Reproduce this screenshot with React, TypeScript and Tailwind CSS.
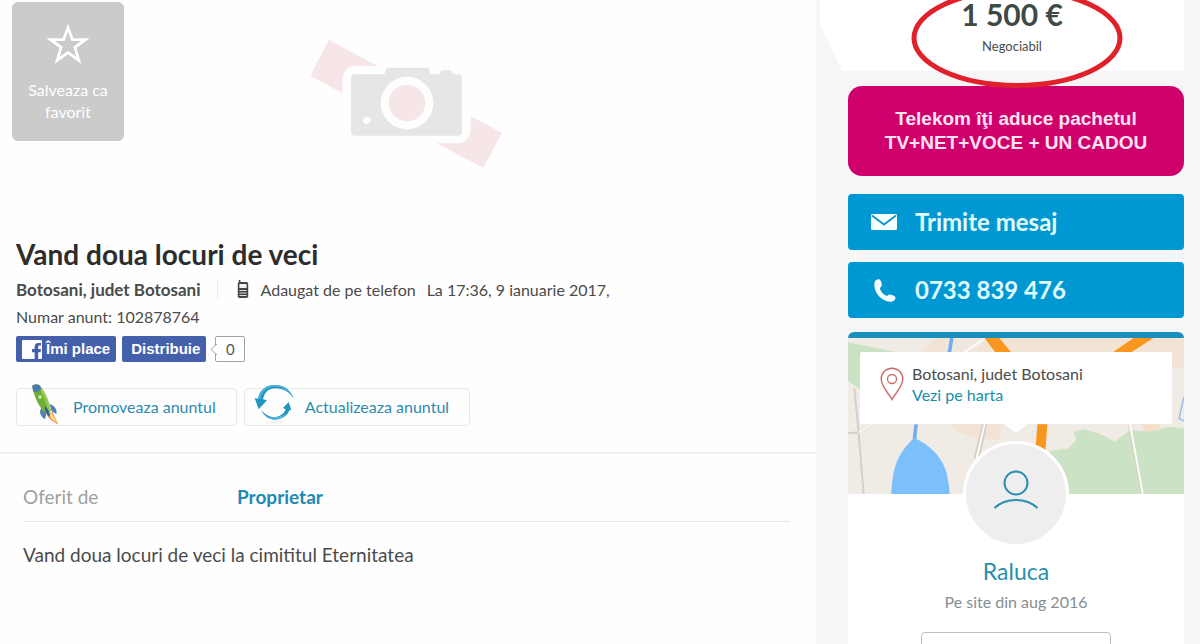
import React from "react";

function StarIcon() {
  return (
    <svg width="42" height="40" viewBox="0 0 42 40" aria-hidden="true">
      <path
        d="M21 3.5l4.3 12.2h13L27.9 23.4l3.9 12.8L21 28.7l-10.8 7.5 3.9-12.8L3.7 15.7h13z"
        fill="none"
        stroke="#fff"
        strokeWidth="2.8"
      />
    </svg>
  );
}

function CameraPlaceholder() {
  return (
    <svg className="mt-5" width="240" height="170" viewBox="-6 0 720 510" role="img" aria-label="Fara fotografie">
      <path d="M116 59L636 339L580 444L61 168z" fill="#f6e6e8" />
      <path
        d="M158 344V176Q160 138 200 138H266Q272 120 292 120H412L440 130H490Q542 136 542 178V326Q538 370 500 370H184Q158 368 158 344z"
        fill="#fefefe"
      />
      <path
        d="M183 174Q183 163 194 163H278Q286 163 286 152Q287 143 296 143H410Q419 143 419 153Q419 163 427 163H444Q450 163 450 157Q452 151 459 151H477Q484 151 486 157Q487 163 492 163H506Q516 163 516 174V337Q516 347 506 347H194Q183 347 183 337z"
        fill="#e6e6e6"
      />
      <circle cx="351" cy="249" r="79" fill="#fefefe" />
      <circle cx="351" cy="249" r="55" fill="#f6e6e8" />
      <circle cx="230" cy="301" r="11" fill="#fefefe" />
    </svg>
  );
}

function MobileIcon() {
  return (
    <svg width="12" height="20" viewBox="0 0 12 20" aria-hidden="true">
      <rect x="1.8" y="0" width="1.6" height="4" fill="#444" />
      <rect x="0.8" y="2" width="10.4" height="16" rx="1.8" fill="#444" />
      <rect x="2.4" y="4" width="7.2" height="4" fill="#f4f4f4" />
      <path d="M2.4 10.5h7.2M2.4 13h7.2M2.4 15.5h7.2" stroke="#ddd" strokeWidth="1" />
    </svg>
  );
}

function FacebookIcon() {
  return (
    <svg width="20" height="19" viewBox="0 0 20 19" aria-hidden="true">
      <path
        d="M1 0H19Q20 0 20 1V18Q20 19 19 19H16.2V12.2H18.6L19 9H16.2V7.2C16.2 6 16.7 5.6 17.7 5.6H19V2.9H16.6C14 2.9 12.6 4.3 12.6 6.8V9H10V12.2H12.6V19H1Q0 19 0 18V1Q0 0 1 0z"
        fill="#fff"
      />
    </svg>
  );
}

function RocketIcon() {
  return (
    <svg className="shrink-0" width="32" height="42" viewBox="0 0 96 126" aria-hidden="true">
      <path d="M46 92L64 84L82 122L60 108z" fill="#f28a4a" />
      <path d="M52 92L62 88L78 118L62 104z" fill="#ffe08c" />
      <path d="M34 70C22 80 26 96 42 106L46 90z" fill="#5580ad" />
      <path d="M56 60C70 64 80 78 76 90L62 82z" fill="#5580ad" />
      <path d="M4 5C10 0 22 0 27 6C42 24 54 50 60 82L44 90C24 68 8 38 4 5z" fill="#6fae38" />
      <path d="M17 1C22 1 25 3 27 6C42 24 54 50 60 82L52 87C46 56 34 26 17 1z" fill="#93cb52" />
      <path d="M4 5C10 0 22 0 27 6L31 14C26 22 16 25 7 23C5 16 4 10 4 5z" fill="#4a7aaf" />
      <path d="M42 66C50 72 56 84 58 100C46 92 40 80 42 66z" fill="#345f96" />
      <circle cx="27" cy="39" r="5" fill="#d9f0c0" />
    </svg>
  );
}

function RefreshIcon() {
  return (
    <svg className="shrink-0" width="42" height="42" viewBox="0 0 126 126" aria-hidden="true">
      <ellipse cx="68" cy="115" rx="30" ry="5" fill="#f5f5f5" />
      <path d="M5 42L15 44C20 16 42 3 66 3C94 3 112 18 122 43C108 22 88 12 66 13C46 14 34 26 30 46L42 49L17 76z" fill="#2196bf" />
      <path d="M15 44C20 16 42 3 66 3C94 3 112 18 122 43C110 22 90 8 66 8C40 9 26 22 22 46z" fill="#4fb2d8" />
      <path d="M90 72L107 54L115 79L109 79C102 98 84 107 66 107C46 106 32 94 24 77C36 92 50 99 66 99C82 98 93 89 98 76z" fill="#2196bf" />
      <path d="M100 88C88 100 62 105 38 92C52 107 88 112 100 88z" fill="#5cbce0" />
    </svg>
  );
}

function MapBackground() {
  return (
    <svg className="absolute inset-0 h-full w-full" viewBox="81 39 1011 468" preserveAspectRatio="none" aria-hidden="true">
      <rect x="81" y="39" width="1011" height="468" fill="#f0ebe5" />
      <path d="M300 80L345 39H1092V130H1052V80z" fill="#f2e3d4" />
      <path d="M385 39H500L460 80H370z" fill="#f0e8df" />
      <path d="M81 52L222 80L122 100V196L81 168z" fill="#cbe3c4" />
      <path d="M385 298H540V345L470 340Q410 325 385 298z" fill="#f2e3d6" />
      <path d="M965 298H1025L1010 322H970z" fill="#f4dfcb" />
      <path d="M690 378L745 370L768 345L760 320L790 313L835 325L885 350L930 315L985 320L1050 305L1092 310V507H690z" fill="#cbe3c4" />
      <path d="M100 190L113 322L128 507M113 322L150 298M81 325L113 322M487 298L462 400M497 298L474 400" stroke="#d5cfc8" strokeWidth="6" fill="none" />
      <path d="M113 322L150 298M492 298L468 400M495 39L430 82M930 298L968 507" stroke="#fff" strokeWidth="5" fill="none" />
      <path d="M924 298L962 507" stroke="#e3cfbd" strokeWidth="2" fill="none" />
      <path d="M393 39L386 82M286 298L281 342" stroke="#74adea" strokeWidth="11" fill="none" />
      <path d="M281 338C322 358 360 390 375 435Q384 465 387 507H211Q214 462 219 440C227 400 250 365 281 338z" fill="#7cc0fb" />
      <path d="M1092 215L1077 280L1092 288" stroke="#8fbcf0" strokeWidth="4" fill="none" />
      <path d="M492 39H536L572 82H524zM940 39H1000L933 82H878zM651 298H681L675 375H645z" fill="#f8961d" />
    </svg>
  );
}

function PinIcon() {
  return (
    <svg className="shrink-0" width="24" height="34" viewBox="0 0 24 34" fill="none" stroke="#cf6a6a" aria-hidden="true">
      <path d="M12 32.5C9.5 27.5 1.2 19.5 1.2 12A10.8 10.8 0 0 1 22.8 12C22.8 19.5 14.5 27.5 12 32.5z" strokeWidth="1.4" />
      <circle cx="12" cy="12" r="4.5" strokeWidth="1.3" />
    </svg>
  );
}

function Avatar() {
  return (
    <div className="relative -mt-[53px] flex size-[106px] items-start justify-center rounded-full border-3 border-white bg-[#eeeeee] pt-[26px]">
      <svg width="46" height="40" viewBox="0 0 46 40" fill="none" stroke="#2b8fb3" strokeWidth="2" aria-hidden="true">
        <circle cx="23" cy="13" r="11.5" />
        <path d="M1.5 38Q10 30 23 30T44.5 38" />
      </svg>
    </div>
  );
}

function Listing() {
  return (
    <main className="min-w-0 flex-1">
      <section className="relative flex h-[236px] items-start justify-center">
        <button className="absolute top-[2px] left-3 flex h-[139px] w-28 flex-col items-center rounded-md bg-[#cbcbcb] px-3 pt-[22px] text-base leading-[22px] text-white">
          <StarIcon />
          <span className="mt-[15px]">Salveaza ca favorit</span>
        </button>
        <CameraPlaceholder />
      </section>

      <section className="border-b-2 border-[#f1f1f1] px-4 pb-[26px]">
        <h1 className="text-[28px] leading-9 font-bold text-[#2d2d2d]">Vand doua locuri de veci</h1>
        <div className="mt-2 flex items-center text-base leading-5">
          <strong className="border-r border-[#eeeeee] pr-4 text-[17px]">Botosani, judet Botosani</strong>
          <span className="ml-[19px] flex items-center gap-3">
            <MobileIcon />
            Adaugat de pe telefon
          </span>
          <span className="ml-[11px]">La 17:36, 9 ianuarie 2017,</span>
        </div>
        <p className="mt-[7px] text-base leading-5">Numar anunt: 102878764</p>

        <div className="mt-[9px] flex h-[26px] items-stretch font-['Liberation_Sans',Arial,sans-serif] text-[15px] font-bold text-white">
          <button className="flex items-center gap-1 rounded-xs bg-[#4560ab] px-[6px]">
            <FacebookIcon />
            Îmi place
          </button>
          <button className="ml-[6px] rounded-xs bg-[#4560ab] pr-[6px] pl-[9px]">Distribuie</button>
          <div className="relative ml-[9px] flex w-[30px] items-center justify-center rounded-xs border border-[#a3a3a3] bg-white font-['Lato',sans-serif] font-normal text-[#555]">
            <svg className="absolute top-[7px] -left-[6px]" width="7" height="11" viewBox="0 0 7 11" aria-hidden="true">
              <path d="M7 0L1 5.5L7 11" fill="#fff" stroke="#a3a3a3" />
            </svg>
            0
          </div>
        </div>

        <div className="mt-[26px] flex h-[38px] items-stretch gap-[7px] text-base text-[#2e8ab0]">
          <a href="#promoveaza" className="flex items-center rounded-sm border border-[#e8e8e8] pr-5 pl-[14px]">
            <span className="-mt-1 mr-[10px]">
              <RocketIcon />
            </span>
            Promoveaza anuntul
          </a>
          <a href="#actualizeaza" className="flex items-center rounded-sm border border-[#e8e8e8] pr-5 pl-2">
            <span className="-mt-1 mr-[10px]">
              <RefreshIcon />
            </span>
            Actualizeaza anuntul
          </a>
        </div>
      </section>

      <section className="pt-[31px] pr-[26px] pl-[23px] text-[19px] leading-6">
        <dl className="flex border-b border-[#e6e6e6] pb-3">
          <dt className="w-[214px] text-[#9f9f9f]">Oferit de</dt>
          <dd className="font-bold text-[#2089b4]">Proprietar</dd>
        </dl>
        <p className="mt-[21px]">Vand doua locuri de veci la cimititul Eternitatea</p>
      </section>
    </main>
  );
}

function Sidebar() {
  return (
    <aside className="w-96 shrink-0 bg-[#f6f6f6] pr-4 pl-1">
      <div className="flex h-[71px] flex-col items-center bg-white pl-5 text-center [clip-path:polygon(0_0,100%_0,100%_100%,22px_100%,0_25px)]">
        <strong className="text-[30px] leading-7 text-[#3f4a45]">1 500 €</strong>
        <span className="mt-2 text-[13px] leading-5">Negociabil</span>
      </div>

      <div className="relative ml-7 pt-[15px]">
        <svg className="absolute -top-[84px] left-[63px]" width="214" height="102" viewBox="0 0 214 102" aria-hidden="true">
          <ellipse cx="106" cy="51" rx="103" ry="47.5" fill="none" stroke="#e0202a" strokeWidth="5" />
        </svg>
        <a
          href="#telekom"
          className="flex h-[90px] flex-col items-center justify-center rounded-[14px] bg-[#cf006c] text-center font-['Liberation_Sans',Arial,sans-serif] text-[19px] leading-6 font-bold text-[#ffe3f4]"
        >
          <span>Telekom îţi aduce pachetul</span>
          <span>TV+NET+VOCE + UN CADOU</span>
        </a>

        <button className="mt-[18px] flex h-14 w-full items-center rounded-sm bg-[#0098d2] pl-[23px] text-2xl font-bold text-[#e2fbff]">
          <svg width="26" height="16" viewBox="0 0 26 16" aria-hidden="true">
            <rect width="26" height="16" rx="1.5" fill="#f4feff" />
            <path d="M1 1.5L13 10.5L25 1.5" fill="none" stroke="#0c93c8" strokeWidth="1.8" />
          </svg>
          <span className="ml-[18px]">Trimite mesaj</span>
        </button>
        <a href="tel:0733839476" className="mt-3 flex h-14 items-center rounded-sm bg-[#0098d2] pl-[26px] text-2xl font-bold text-[#e2fbff]">
          <svg width="22" height="23" viewBox="0 0 22 23" aria-hidden="true">
            <path
              d="M1 2C3 .2 5 0 6 .8C7.5 2.5 8 5 7.7 6.7C7.4 8 5.8 8.2 6 9.5C6.7 12.5 10 16 12.6 16.8C13.8 17.1 14.2 15.6 15.5 15.5C17.5 15.4 20 16.6 21.3 18C22 19.5 20.5 22 18.5 22.5C11 24 2.5 17 .8 9.5C.2 6.5 .1 4 1 2z"
              fill="#f4feff"
            />
          </svg>
          <span className="ml-[19px]">0733 839 476</span>
        </a>

        <div className="mt-[14px] flex flex-col items-center rounded-t-md border-t-6 border-[#188fbc] bg-white">
          <div className="relative w-full pt-[14px] pb-[70px]">
            <MapBackground />
            <div className="relative mx-3 flex h-[72px] items-start gap-2 rounded-xs bg-white pt-[11px] pl-5 leading-[21px]">
              <span className="mt-1">
                <PinIcon />
              </span>
              <div className="flex flex-col">
                <span>Botosani, judet Botosani</span>
                <a href="#harta" className="text-[#188fab]">
                  Vezi pe harta
                </a>
              </div>
              <svg className="absolute top-full left-1/2 -ml-[12px]" width="24" height="9" viewBox="0 0 24 9" aria-hidden="true">
                <path d="M0 0H24L12 9z" fill="#fff" />
              </svg>
            </div>
          </div>
          <Avatar />
          <a href="#raluca" className="mt-[10px] text-[23px] leading-7 text-[#2a8fa8]">
            Raluca
          </a>
          <span className="mt-[7px] leading-5 text-[#868e90]">Pe site din aug 2016</span>
          <button aria-label="Anunturile utilizatorului" className="mt-5 h-11 w-[190px] rounded-sm border border-[#bfbfbf] bg-white" />
        </div>
      </div>
    </aside>
  );
}

export default function App() {
  return (
    <div className="flex h-screen overflow-hidden bg-[#fefefe] font-['Lato',sans-serif] text-base text-[#4b4b4b]">
      <Listing />
      <Sidebar />
    </div>
  );
}
